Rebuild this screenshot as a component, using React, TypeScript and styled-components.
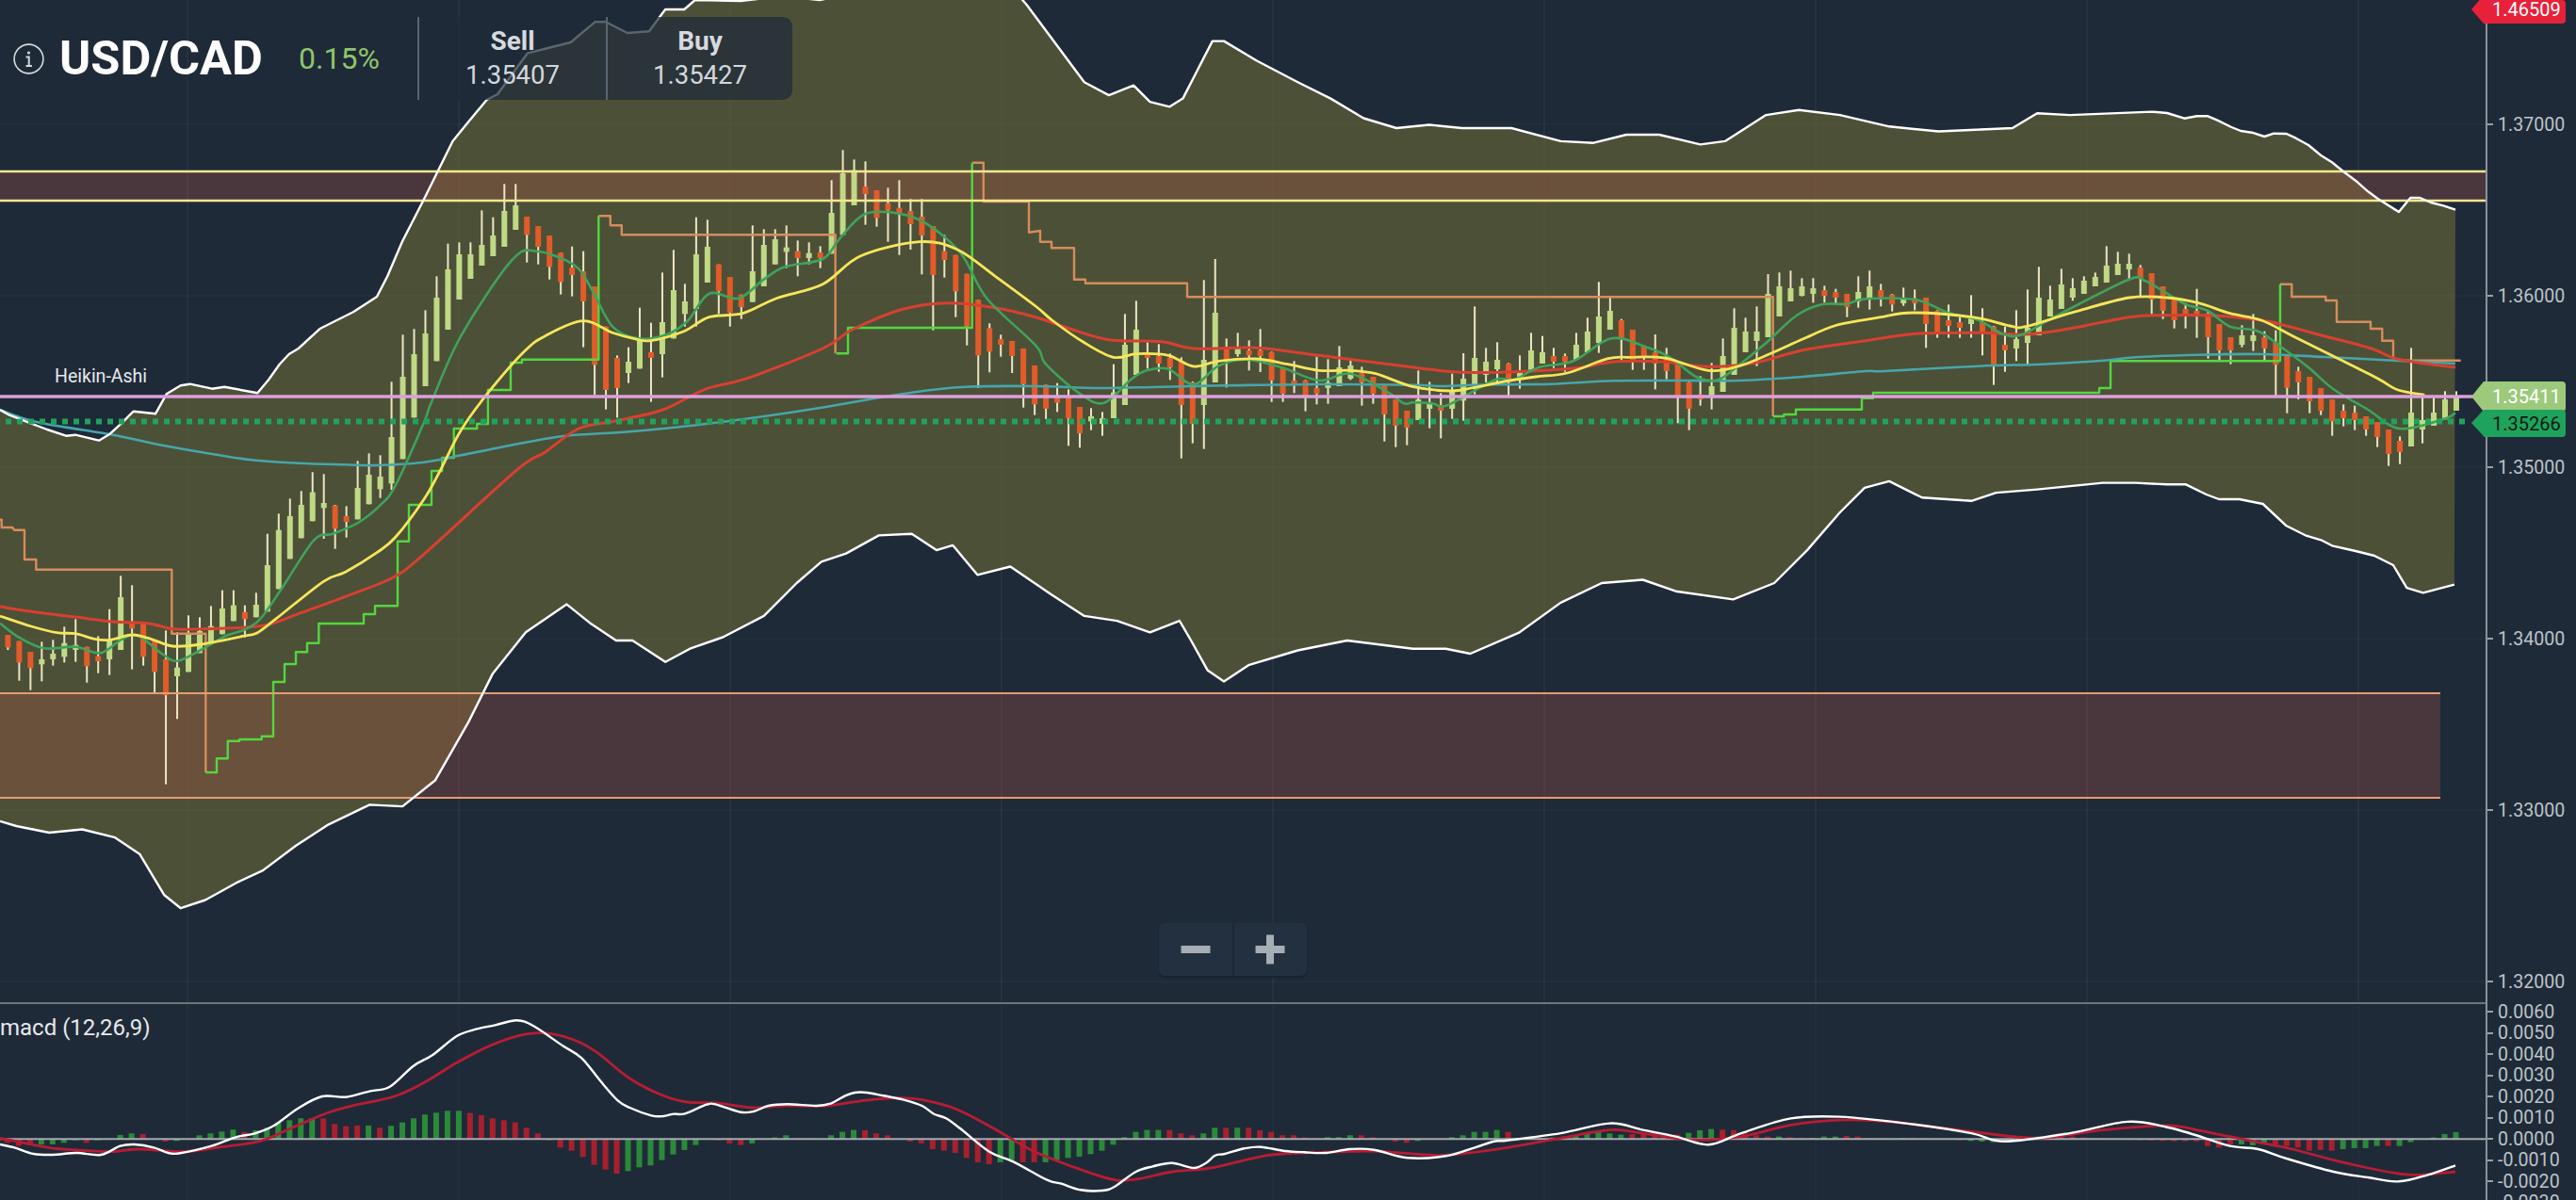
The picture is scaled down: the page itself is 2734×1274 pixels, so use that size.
import React from 'react';
import styled, { createGlobalStyle } from 'styled-components';

const GlobalStyle = createGlobalStyle`
  html, body {
    margin: 0;
    padding: 0;
    background: #1f2a38;
    font-family: Roboto, "Liberation Sans", sans-serif;
  }
`;

const Page = styled.div`
  position: relative;
  width: 2734px;
  height: 1274px;
  overflow: hidden;
  display: grid;
  grid-template-columns: 2638px 96px;
  grid-template-rows: 1066px 208px;
  background: #1f2a38;
`;

const Pane = styled.section`
  position: relative;
  min-width: 0;
`;

const MainPane = styled(Pane)`
  border-bottom: 2px solid #6f757b;
  box-sizing: border-box;
`;

const ChartSvg = styled.svg`
  display: block;
`;

const Header = styled.header`
  position: absolute;
  top: 18px;
  left: 0;
  height: 88px;
  display: flex;
  align-items: center;
  padding-left: 14px;
`;

const InfoIcon = styled.svg`
  width: 33px;
  height: 33px;
  flex: none;
  margin-right: 16px;
`;

const Title = styled.h1`
  width: 213px;
  flex: none;
  margin: 0 41px 0 0;
  font-size: 50.5px;
  line-height: 56px;
  font-weight: 700;
  color: #fff;
  white-space: nowrap;
`;

const Change = styled.span`
  width: 83px;
  flex: none;
  margin-right: 43px;
  font-size: 32px;
  font-weight: 400;
  color: #8fc56a;
  white-space: nowrap;
`;

const QuoteBox = styled.div`
  display: flex;
  height: 88px;
  background: rgba(31, 42, 56, 0.73);
  border-radius: 0 10px 10px 0;
  border-left: 2px solid #5a6470;
`;

const Quote = styled.div<{ $wide: number }>`
  width: ${({ $wide }) => $wide}px;
  box-sizing: border-box;
  padding-top: 11px;
  display: flex;
  flex-direction: column;
  align-items: center;
  gap: 6px;

  & + & {
    border-left: 2px solid #5a6470;
  }
`;

const QuoteLabel = styled.span`
  font-size: 28px;
  line-height: 30px;
  font-weight: 700;
  color: #d6dadf;
`;

const QuotePrice = styled.span`
  font-size: 27.5px;
  line-height: 30px;
  font-weight: 400;
  color: #d3d7db;
`;

const ChartType = styled.span`
  position: absolute;
  left: 58px;
  top: 388px;
  font-size: 19.5px;
  line-height: 24px;
  color: #e6e9ec;
`;

const ZoomBar = styled.div`
  position: absolute;
  left: 1230px;
  top: 980px;
  width: 157px;
  height: 56px;
  display: flex;
  background: #223040;
  border-radius: 6px;
  box-shadow: 0 2px 1px #19222e;
`;

const ZoomButton = styled.button<{ $plus?: boolean }>`
  position: relative;
  flex: 1;
  padding: 0;
  border: none;
  background: transparent;

  & + & {
    border-left: 2px solid #1d2836;
  }

  &::before {
    content: '';
    position: absolute;
    left: 50%;
    top: 50%;
    width: 31px;
    height: 8px;
    transform: translate(-50%, -50%);
    background: #a6adb4;
  }

  &::after {
    content: '';
    display: ${({ $plus }) => ($plus ? 'block' : 'none')};
    position: absolute;
    left: 50%;
    top: 50%;
    width: 8px;
    height: 31px;
    transform: translate(-50%, -50%);
    background: #a6adb4;
  }
`;

const Legend = styled.span`
  position: absolute;
  left: 0;
  top: 11px;
  font-size: 24px;
  line-height: 28px;
  color: #e6e9ec;
`;

const Axis = styled.ol`
  margin: 0;
  padding: 0;
  list-style: none;
  border-left: 2px solid #8b9199;
  overflow: hidden;
`;

const PriceAxis = styled(Axis)`
  padding-top: 41px;
`;

const TickRow = styled.li<{ $h: number }>`
  height: ${({ $h }) => $h}px;
  display: flex;
  align-items: center;
  gap: 5px;
  font-size: 19.6px;
  color: #bdc3c9;
  white-space: nowrap;

  &::before {
    content: '';
    width: 6px;
    height: 2px;
    flex: none;
    background: #9aa0a6;
  }
`;

const MacdTicks = styled.div`
  margin-top: -3.2px;
`;

const Tag = styled.div<{ $bg: string; $fg: string; $top: number; $h: number; $tip: number }>`
  position: absolute;
  left: 2636px;
  top: ${({ $top }) => $top}px;
  width: 87px;
  height: ${({ $h }) => $h}px;
  box-sizing: border-box;
  padding-left: 9px;
  padding-bottom: ${({ $h, $tip }) => Math.max($h - 2 * $tip, 0)}px;
  display: flex;
  align-items: center;
  font-size: 20px;
  color: ${({ $fg }) => $fg};
  background: ${({ $bg }) => $bg};
  border-radius: 0 4px 4px 0;

  &::before {
    content: '';
    position: absolute;
    left: -13px;
    top: ${({ $h, $tip }) => $tip - Math.max($tip, $h - $tip)}px;
    width: 0;
    height: 0;
    border-style: solid;
    border-width: ${({ $h, $tip }) => Math.max($tip, $h - $tip)}px 13px ${({ $h, $tip }) => Math.max($tip, $h - $tip)}px 0;
    border-color: transparent ${({ $bg }) => $bg} transparent transparent;
  }
`;

type Pt = [number, number];

// zoom crop coordinates -> page pixels
const seg = (ox: number, oy: number, sx: number, v: number[]): Pt[] => {
  const out: Pt[] = [];
  for (let i = 0; i < v.length; i += 2) out.push([ox + v[i] / sx, oy + v[i + 1] / 3]);
  return out;
};
const z8 = (v: number[]) => seg(0, 370, 3, v);
const z7 = (v: number[]) => seg(400, 150, 2.24, v);
const z9 = (v: number[]) => seg(1000, 240, 3, v);
const z10 = (v: number[]) => seg(1480, 240, 3, v);
const z11 = (v: number[]) => seg(1900, 240, 3, v);
const z3 = (v: number[]) => seg(2300, 300, 3, v);
const z2 = (v: number[]) => seg(2300, 0, 3, v);
const z1 = (v: number[]) => seg(0, 0, 1.742, v);
const z6 = (v: number[]) => seg(0, 1040, 1.96, v);
const z12 = (v: number[]) => seg(800, 1100, 1.96, v);
const z4 = (v: number[]) => seg(2300, 1040, 3, v);
const disp = (v: number[]): Pt[] => {
  const out: Pt[] = [];
  for (let i = 0; i < v.length; i += 2) out.push([v[i] * 1.7436, v[i + 1] * 1.7436]);
  return out;
};

const increasing = (pts: Pt[]) => {
  const out: Pt[] = [];
  pts.forEach((p) => {
    if (!out.length || p[0] > out[out.length - 1][0] + 1) out.push(p);
  });
  return out;
};

const poly = (pts: Pt[]) =>
  pts.map((p, i) => `${i ? 'L' : 'M'}${p[0].toFixed(1)} ${p[1].toFixed(1)}`).join('');

const smooth = (raw: Pt[]) => {
  const p = increasing(raw);
  let d = `M${p[0][0].toFixed(1)} ${p[0][1].toFixed(1)}`;
  for (let i = 0; i < p.length - 1; i++) {
    const a = p[Math.max(i - 1, 0)];
    const b = p[i];
    const c = p[i + 1];
    const e = p[Math.min(i + 2, p.length - 1)];
    const c1x = b[0] + (c[0] - a[0]) / 6;
    const c1y = b[1] + (c[1] - a[1]) / 6;
    const c2x = c[0] - (e[0] - b[0]) / 6;
    const c2y = c[1] - (e[1] - b[1]) / 6;
    d += `C${c1x.toFixed(1)} ${c1y.toFixed(1)} ${c2x.toFixed(1)} ${c2y.toFixed(1)} ${c[0].toFixed(1)} ${c[1].toFixed(1)}`;
  }
  return d;
};

const upperBand: Pt[] = [
  ...z8([0, 195, 30, 212, 90, 235, 150, 258, 210, 278, 240, 275, 315, 293, 350, 272, 390, 235, 425, 200, 495, 208, 530, 145, 575, 118, 605, 113, 675, 128, 715, 122, 820, 142, 855, 100, 890, 50, 920, 18, 950, 0]),
  ...disp([195, 200, 215, 190]),
  ...z7([0, 495, 25, 430, 60, 320, 110, 190, 145, 95, 180, 0]),
  ...z1([865, 390, 900, 318, 920, 300, 975, 170, 1020, 150, 1055, 135, 1100, 70, 1120, 70, 1160, 105, 1200, 100, 1230, 30, 1265, 30, 1285, 0]),
  [786, 1],
  [830, -4],
  [870, 0],
  [900, -6],
  [1080, -6],
  ...disp([625, 3, 660, 50, 675, 58, 690, 52, 700, 62, 712, 65, 720, 60, 738, 25, 745, 25, 765, 37, 790, 50, 810, 60, 830, 72, 850, 78, 870, 76, 890, 78, 920, 78, 950, 86, 970, 87, 990, 82, 1010, 82, 1035, 88, 1050, 86, 1075, 70, 1095, 67, 1120, 70, 1150, 77, 1180, 80, 1225, 78, 1240, 69, 1260, 70, 1310, 68]),
  ...z2([0, 360, 55, 377, 95, 370, 130, 370, 160, 383, 205, 405, 235, 417, 270, 422, 310, 435, 340, 425, 380, 426, 410, 440, 450, 462, 490, 495, 525, 517, 560, 545, 600, 575, 640, 610, 670, 632, 738, 675, 775, 630, 805, 630, 840, 645, 880, 655, 918, 668]),
];

const lowerBand: Pt[] = [
  ...disp([0, 500, 10, 503, 30, 507, 50, 505, 70, 510, 85, 520, 100, 545, 110, 553, 125, 548, 145, 537, 160, 530, 180, 515, 200, 502, 225, 490, 245, 491, 265, 475, 285, 440, 300, 410, 320, 385, 345, 368, 360, 380, 375, 390, 385, 390, 405, 403, 420, 395, 440, 388, 465, 375, 485, 355, 500, 342, 515, 337, 535, 326, 555, 325, 570, 335, 580, 332, 595, 350, 615, 345, 640, 362, 660, 375, 680, 378, 700, 385, 718, 378, 725, 390, 735, 408, 745, 415, 760, 405, 790, 396, 805, 393, 820, 390, 860, 395, 880, 395, 895, 398, 925, 385, 950, 367, 975, 355, 1000, 353, 1020, 360, 1055, 365, 1080, 355, 1100, 335, 1120, 312, 1135, 297, 1150, 293, 1170, 303, 1200, 305, 1215, 300, 1240, 298, 1260, 296, 1280, 294, 1300, 294]),
  ...z3([0, 643, 60, 643, 125, 675, 165, 690, 230, 690, 305, 705, 380, 775, 440, 805, 490, 820, 525, 838, 600, 855, 660, 870, 720, 900]),
  ...disp([1465, 358, 1475, 361, 1494, 356]),
];

const lineTeal = [
  ...z8([0, 195, 120, 235, 360, 275, 500, 305, 640, 330, 800, 355, 950, 365, 1100, 370, 1200, 372, 1350, 362]),
  ...z7([200, 1000, 350, 960, 450, 938, 600, 925, 750, 905, 900, 880, 1050, 850, 1200, 815, 1300, 795, 1400, 782, 1566, 780]),
  ...z9([300, 510, 500, 516, 700, 512, 900, 508, 1200, 504, 1500, 506]),
  ...z10([150, 510, 300, 505, 500, 503, 700, 493, 900, 492, 1100, 492, 1300, 480, 1500, 462]),
  ...z11([300, 462, 600, 446, 800, 440, 1000, 428, 1100, 418, 1300, 410, 1500, 408]),
  ...z3([300, 230, 500, 237, 720, 248, 918, 258]),
];

const lineRed = [
  ...z8([0, 822, 100, 838, 240, 855, 360, 870, 470, 875, 550, 893, 650, 893, 780, 888, 860, 878, 950, 845, 1100, 790, 1250, 730, 1350, 655]),
  ...z7([330, 1050, 400, 990, 480, 915, 570, 890, 680, 855, 780, 790, 880, 755, 1060, 660, 1130, 600, 1250, 535, 1360, 515, 1470, 530, 1566, 560]),
  ...z9([400, 325, 530, 362, 700, 368, 800, 390, 1000, 388, 1200, 412, 1500, 450]),
  ...z10([100, 455, 200, 465, 360, 465, 500, 458, 600, 450, 700, 432, 850, 432, 1000, 448, 1150, 435, 1300, 395, 1500, 365]),
  ...z11([200, 370, 400, 343, 600, 340, 750, 345, 900, 325, 1080, 290, 1200, 284, 1350, 285, 1500, 300]),
  ...z3([370, 135, 500, 170, 650, 210, 720, 240, 800, 255, 918, 270]),
];

const lineYellow = [
  ...z8([0, 852, 100, 885, 180, 905, 240, 908, 300, 925, 350, 928, 420, 912, 480, 925, 550, 948, 640, 942, 780, 915, 820, 905, 880, 860, 1030, 742, 1100, 712, 1200, 650, 1260, 600, 1350, 480]),
  ...z7([150, 1050, 200, 920, 265, 800, 350, 670, 400, 620, 490, 572, 560, 610, 610, 628, 650, 635, 730, 605, 790, 560, 870, 548, 950, 500, 1060, 455, 1150, 365, 1290, 320, 1380, 345, 1470, 430, 1566, 525]),
  ...z9([350, 300, 450, 370, 545, 418, 620, 407, 720, 412, 800, 447, 880, 430, 1000, 423, 1100, 440, 1200, 460, 1300, 460, 1380, 470, 1500, 512]),
  ...z10([50, 510, 180, 525, 250, 515, 350, 495, 450, 480, 550, 468, 680, 422, 750, 418, 860, 420, 1000, 460, 1100, 445, 1200, 405, 1300, 360, 1400, 318, 1500, 298]),
  ...z11([150, 318, 290, 290, 390, 276, 580, 290, 700, 318, 750, 320, 900, 275, 1080, 228, 1200, 228]),
  ...z3([100, 65, 200, 98, 300, 120, 400, 170, 530, 235, 670, 305, 735, 342, 820, 358]),
];

const lineGreen = [
  ...z8([0, 875, 60, 920, 140, 955, 240, 950, 320, 970, 390, 925, 440, 915, 520, 975, 565, 995, 640, 960, 720, 915, 780, 895, 830, 860, 900, 760, 1000, 610, 1060, 590, 1140, 555, 1210, 500, 1260, 435, 1350, 235]),
  ...z7([130, 830, 200, 620, 320, 380, 380, 350, 470, 395, 510, 470, 560, 590, 620, 628, 690, 615, 740, 570, 790, 485, 860, 500, 920, 440, 970, 400, 1060, 375, 1100, 310, 1160, 232, 1240, 230, 1310, 265, 1390, 360, 1450, 500, 1566, 650]),
  ...z9([330, 440, 440, 535, 515, 563, 600, 490, 650, 460, 720, 455, 800, 505, 880, 445, 970, 425, 1080, 450, 1200, 492, 1300, 470, 1420, 530, 1470, 565, 1500, 562]),
  ...z10([120, 565, 170, 570, 320, 490, 380, 490, 460, 450, 570, 430, 690, 358, 800, 385, 880, 420, 960, 480, 1030, 490, 1100, 440, 1180, 375, 1280, 285, 1360, 250, 1440, 248, 1500, 232]),
  ...z11([130, 243, 240, 228, 400, 235, 500, 275, 600, 300, 680, 345, 740, 345, 840, 290, 1075, 172, 1130, 175, 1200, 215]),
  ...z3([60, 70, 130, 90, 200, 140, 290, 155, 370, 210, 450, 270, 530, 340, 640, 405, 740, 465, 880, 435, 918, 415]),
];

const stepsOrange: Pt[][] = [
  z8([0, 545, 5, 545, 5, 570, 40, 570, 45, 578, 78, 578, 78, 672, 115, 672, 115, 704, 547, 704, 547, 908, 655, 908, 655, 1350]),
  z7([527, 238, 555, 238, 555, 268, 582, 268, 582, 298, 1090, 298, 1090, 676]),
  [
    ...z7([1415, 68, 1442, 68, 1442, 192, 1550, 192, 1550, 290]),
    ...z9([312, 15, 312, 50, 348, 50, 348, 70, 420, 70, 420, 170, 456, 170, 456, 182, 780, 182, 780, 226]),
    ...z10([1205, 226, 1205, 606]),
  ],
  z3([360, 5, 397, 5, 397, 45, 505, 45, 505, 57, 540, 57, 540, 125, 648, 125, 648, 147, 685, 147, 685, 185, 720, 185, 720, 248, 935, 248]),
];

const stepsGreen: Pt[][] = [
  [
    ...z8([655, 1350, 690, 1350, 690, 1306, 725, 1306, 725, 1250, 762, 1250, 762, 1245, 833, 1245, 833, 1235, 870, 1235, 870, 1062, 906, 1062, 906, 1005, 942, 1005, 942, 967, 978, 967, 978, 938, 1015, 938, 1015, 876, 1158, 876, 1158, 846, 1194, 846, 1194, 820, 1266, 820, 1266, 614, 1302, 614, 1302, 498]),
    [458, 536],
    [458, 500],
    ...z7([155, 1050, 155, 1008, 183, 1008, 183, 915, 238, 915, 238, 900, 264, 900, 264, 792, 318, 792, 318, 705, 345, 705, 345, 695, 527, 695, 527, 238]),
  ],
  z7([1093, 676, 1120, 676, 1120, 594, 1415, 594, 1415, 70]),
  [
    ...z10([1205, 606, 1240, 606, 1240, 600, 1278, 600, 1278, 584]),
    ...z11([228, 584, 228, 548, 264, 548, 264, 531, 984, 531, 984, 516, 1020, 516, 1020, 430]),
    ...z3([360, 250, 360, 5]),
  ],
];

// [high, bodyTop, bodyBottom, low, rising]
type Row = [number, number, number, number, number];

const rowsA: Row[] = [
  [912, 912, 952, 960, 0], [932, 932, 1000, 1058, 0], [966, 966, 1018, 1088, 0], [934, 990, 1006, 1060, 1],
  [928, 972, 990, 1010, 1], [886, 938, 982, 1000, 1], [862, 944, 960, 998, 1], [950, 950, 1012, 1064, 0],
  [916, 980, 996, 1034, 0], [830, 930, 990, 1040, 1], [724, 792, 960, 960, 1], [754, 876, 892, 1022, 0],
  [870, 876, 982, 1010, 0], [930, 930, 1030, 1096, 0], [898, 990, 1104, 1388, 0], [904, 1016, 1044, 1180, 1],
  [850, 910, 1030, 1030, 1], [856, 900, 970, 970, 1], [820, 884, 940, 940, 1], [770, 828, 910, 910, 1],
  [770, 818, 868, 868, 1], [818, 840, 862, 920, 0], [778, 816, 856, 856, 1], [590, 690, 838, 838, 1],
  [526, 578, 766, 766, 1], [478, 534, 670, 670, 1], [454, 498, 604, 604, 1], [394, 458, 550, 550, 1],
  [400, 492, 508, 606, 1], [498, 500, 574, 638, 0], [502, 534, 552, 602, 0], [358, 444, 544, 544, 1],
  [334, 402, 496, 496, 1], [340, 408, 448, 476, 1], [106, 282, 430, 450, 1],
];

const rowsB: Row[] = [
  [616, 750, 1012, 1012, 1], [598, 678, 880, 880, 1], [538, 612, 780, 780, 1], [430, 498, 700, 700, 1],
  [326, 408, 600, 600, 1], [322, 360, 504, 504, 1], [322, 360, 438, 438, 1], [220, 330, 396, 396, 1],
  [242, 300, 366, 366, 1], [136, 222, 336, 336, 1], [136, 204, 282, 282, 1], [240, 240, 298, 386, 0],
  [270, 270, 336, 392, 0], [300, 300, 400, 440, 0], [355, 355, 448, 488, 0], [335, 402, 426, 494, 0],
  [350, 414, 510, 656, 0], [462, 462, 712, 808, 0], [590, 590, 792, 854, 0], [682, 690, 786, 880, 0],
  [656, 702, 738, 770, 1], [530, 630, 724, 724, 1], [578, 672, 690, 830, 0], [418, 576, 678, 752, 1],
  [346, 474, 628, 628, 1], [454, 510, 550, 590, 1], [242, 360, 534, 590, 1], [250, 336, 450, 450, 1],
  [392, 392, 478, 550, 0], [432, 432, 546, 590, 0], [488, 488, 528, 566, 0], [268, 414, 512, 512, 1],
  [280, 330, 462, 462, 1], [280, 312, 392, 392, 1], [268, 338, 352, 404, 1], [316, 350, 372, 430, 0],
  [322, 356, 372, 392, 1], [334, 354, 372, 404, 0], [124, 228, 358, 358, 1], [28, 102, 298, 298, 1],
  [58, 92, 204, 204, 1], [64, 144, 168, 266, 0], [156, 156, 244, 272, 0], [148, 198, 220, 320, 0],
  [124, 212, 228, 362, 0], [184, 222, 264, 345, 0], [184, 240, 300, 424, 0], [270, 270, 426, 602, 0],
  [298, 350, 378, 434, 0], [362, 362, 478, 560, 0], [422, 422, 590, 650, 0], [505, 505, 682, 786, 0],
  [580, 595, 670, 736, 0], [616, 630, 648, 686, 0], [636, 636, 684, 738, 0], [660, 660, 774, 848, 0],
  [714, 714, 838, 872, 0],
];

const rowsC: Row[] = [
  [505, 505, 582, 615, 0], [500, 545, 563, 592, 0], [520, 545, 612, 700, 0], [576, 576, 660, 706, 0],
  [580, 606, 622, 650, 1], [592, 612, 630, 668, 1], [440, 530, 612, 612, 1], [280, 378, 570, 570, 1],
  [238, 330, 474, 474, 1], [370, 402, 420, 454, 0], [376, 414, 438, 464, 0], [406, 420, 450, 490, 0],
  [418, 432, 570, 740, 0], [495, 498, 630, 692, 0], [172, 426, 570, 710, 1], [105, 276, 498, 498, 1],
  [358, 384, 426, 514, 0], [340, 390, 408, 416, 1], [364, 396, 412, 460, 0], [328, 396, 414, 465, 0],
  [400, 402, 492, 560, 0], [450, 452, 534, 560, 0], [430, 492, 508, 532, 0], [490, 492, 546, 590, 0],
  [416, 516, 534, 568, 0], [424, 498, 516, 566, 1], [382, 450, 510, 510, 1], [424, 444, 486, 490, 1],
  [448, 468, 498, 572, 0], [480, 480, 534, 566, 0], [508, 508, 600, 686, 0], [552, 552, 636, 704, 0],
  [588, 588, 642, 698, 0], [460, 552, 618, 618, 1], [496, 564, 582, 644, 1], [532, 570, 588, 676, 0],
  [470, 528, 582, 614, 1], [405, 486, 556, 620, 1], [256, 420, 510, 536, 1], [388, 432, 474, 498, 1],
  [370, 426, 456, 500, 1], [436, 438, 498, 540, 0], [412, 466, 480, 518, 1], [340, 396, 462, 462, 1],
  [350, 402, 438, 438, 1], [388, 414, 432, 452, 0], [406, 414, 432, 464, 0], [340, 378, 426, 426, 1],
  [292, 336, 402, 402, 1], [178, 288, 372, 404, 1], [228, 270, 330, 330, 1], [296, 300, 360, 430, 0],
  [330, 330, 426, 458, 0], [380, 384, 420, 458, 0], [345, 402, 438, 520, 0], [388, 420, 462, 488, 0],
  [438, 440, 540, 628, 0], [496, 498, 582, 650, 0], [478, 536, 552, 572, 0], [436, 510, 540, 584, 1],
  [358, 414, 528, 528, 1], [262, 324, 474, 474, 1], [292, 336, 402, 402, 1], [256, 336, 366, 446, 1],
  [153, 216, 354, 354, 1], [148, 192, 288, 288, 1], [142, 198, 240, 240, 1], [166, 192, 222, 224, 1],
  [166, 198, 216, 244, 1], [190, 204, 222, 244, 0], [200, 210, 228, 248, 0], [216, 216, 258, 290, 0],
  [160, 210, 240, 260, 1], [142, 192, 228, 266, 1], [184, 204, 226, 256, 0], [216, 218, 250, 272, 0],
  [196, 230, 246, 254, 1], [202, 230, 246, 268, 0], [228, 228, 312, 388, 0], [268, 270, 336, 356, 0],
  [250, 300, 318, 356, 0], [290, 306, 324, 356, 0], [220, 294, 312, 356, 1], [262, 306, 342, 412, 0],
  [318, 320, 444, 506, 0], [320, 378, 396, 464, 0], [268, 360, 390, 430, 1], [202, 324, 372, 440, 1],
  [130, 228, 348, 348, 1], [190, 234, 288, 288, 1], [136, 186, 264, 264, 1], [166, 198, 228, 238, 1],
  [160, 174, 216, 216, 1], [148, 162, 192, 192, 1], [64, 126, 180, 180, 1], [82, 120, 156, 156, 1],
  [88, 120, 138, 170, 1], [124, 132, 168, 228, 0], [150, 150, 234, 280, 0], [192, 192, 270, 296, 0],
  [230, 230, 300, 326, 0], [245, 264, 286, 326, 0], [200, 270, 288, 356, 0], [270, 278, 354, 422, 0],
  [312, 312, 396, 428, 0], [354, 354, 396, 440, 0], [316, 348, 378, 386, 1], [280, 348, 366, 398, 1],
];

const rowsD: Row[] = [
  [155, 174, 210, 252, 0], [152, 192, 262, 366, 0], [232, 234, 335, 416, 0], [268, 282, 318, 372, 0],
  [300, 300, 378, 416, 0], [336, 336, 408, 422, 0], [372, 372, 442, 488, 0], [388, 408, 432, 458, 0],
  [392, 414, 438, 470, 0], [426, 426, 468, 488, 0], [444, 444, 492, 524, 0], [468, 468, 546, 584, 0],
  [490, 504, 540, 578, 0], [208, 414, 522, 522, 1], [366, 438, 468, 512, 1], [366, 414, 456, 456, 1],
  [346, 372, 436, 436, 1], [346, 366, 408, 408, 1],
];

const candles = [
  ...rowsA.map((r) => ({ base: 370, r })),
  ...rowsB.map((r) => ({ base: 150, r })),
  ...rowsC.map((r) => ({ base: 240, r })),
  ...rowsD.map((r) => ({ base: 300, r })),
];

const candleX = (i: number) => 8.4 + 11.975 * i;

// histogram bars: crop y of the bar end, negative means a red bar
const histA = [-520, -530, -525, 525, 525, 520, 512, -520, 512, 508, 495, 490, -492, 508, -516, 514, 508, 496, 490, 484, 478, -485, 480, 472, 455, 448, 442, 442, -442, -460, -467, -465, 465, -472, 466, 455, 442, 430, 424, 418, 418, -425, -432, -442, -448, -455, -472, -490, -512, -535, -545, -565, -590, -605, -618, 610, 598, 592, 575, 557, 543, 527, 508, -512, -522, -527, 522];
const histB = [328, 323, 316, -324, -325, 328, 316, 305, 299, -300, -310, -316, 328, -336, -342, -360, -365, -372, -388, -402, -408, 402, 395, -402, -402, 402, 395, 388, 384, 376, 365, 346, 322, 305, 299, 299, -299, -310, -316, 310, 292, -292, 292, -292, -300, -305, -316, -316, -323, -325, 322, 322, 316, -316, -322, 328, -336, -340, 334, 328, 328, 322, 316, 305, 305, 299, -305];
const histC = [-505, -502, -505, 503, 500, 496, 490, 486, 490, 494, -492, -488, -486, -490, -494, 488, 480, 476, -478, -480, -490, -496, -500, 500, -502, -504, 504, 500, 500, -498, -500, -504, -505, 508, 505, -504, -506, -508, -510, -512, 514, 516, 518, 514, 510, 506, 500, 498, -498, -500, -503, -505, -507, -509, -511, -512, -513, -514, -515, -515, -515, -530, -535, -525, 525, 528, 525, -525, -530, -535, -545, -543, -545, 540, 537, 537, 530, -530, 530, 518, 508, 503, 492, 486];

const bars = [
  ...histA.map((v) => ({ h: (508 - Math.abs(v)) / 3, up: v > 0 })),
  ...histB.map((v) => ({ h: (328 - Math.abs(v)) / 3, up: v > 0 })),
  ...histC.map((v) => ({ h: (508 - Math.abs(v)) / 3, up: v > 0 })),
];

const macdWhite = [
  ...z6([0, 525, 30, 535, 70, 555, 110, 558, 160, 552, 210, 558, 250, 530, 280, 525, 320, 535, 350, 552, 375, 553, 440, 530, 490, 502, 530, 490, 570, 465, 620, 410, 670, 372, 720, 374, 770, 355, 810, 342, 860, 275, 900, 240, 950, 180, 990, 158, 1030, 145, 1075, 130, 1110, 148, 1170, 210, 1210, 250, 1250, 325, 1285, 385, 1310, 408, 1355, 433, 1380, 435, 1400, 428, 1425, 427, 1470, 398, 1490, 398, 1540, 422, 1568, 420]),
  ...z12([30, 222, 70, 217, 130, 222, 160, 215, 190, 190, 210, 180, 235, 180, 270, 190, 310, 202, 350, 222, 375, 248, 400, 262, 430, 295, 490, 368, 540, 400, 610, 458, 640, 470, 680, 490, 725, 492, 750, 480, 795, 432, 830, 415, 870, 404, 915, 420, 940, 405, 960, 380, 980, 375, 1020, 358, 1055, 353, 1105, 366, 1145, 370, 1190, 372, 1240, 360, 1290, 362, 1360, 388, 1440, 382, 1500, 355, 1540, 335, 1568, 332]),
  ...disp([950, 690, 980, 684, 1000, 688, 1020, 692, 1040, 697, 1060, 690, 1090, 681, 1120, 680, 1160, 684, 1200, 690, 1220, 695, 1260, 690, 1295, 683]),
  ...z4([0, 470, 90, 495, 200, 530, 290, 540, 380, 570, 530, 612, 640, 630, 738, 643, 830, 622, 918, 592]),
];

const macdRed = [
  ...z6([0, 505, 50, 520, 100, 535, 160, 543, 230, 548, 290, 540, 380, 548, 450, 535, 540, 515, 610, 470, 680, 425, 730, 403, 820, 372, 880, 330, 950, 265, 1020, 210, 1080, 178, 1130, 170, 1190, 190, 1240, 230, 1310, 315, 1380, 370, 1430, 390, 1490, 393, 1568, 408]),
  ...z12([60, 222, 150, 222, 230, 205, 300, 197, 350, 203, 420, 232, 500, 295, 580, 365, 680, 425, 750, 458, 800, 455, 870, 432, 950, 420, 1050, 385, 1100, 375, 1250, 367, 1300, 367, 1400, 378, 1450, 378, 1568, 355]),
  ...disp([950, 693, 980, 688, 1000, 690, 1030, 694, 1060, 692, 1090, 685, 1120, 682, 1150, 683, 1200, 689, 1240, 693, 1280, 688]),
  ...z4([0, 465, 90, 478, 200, 500, 300, 520, 400, 540, 530, 575, 640, 600, 738, 618, 800, 622, 918, 612]),
];

const gridX = [199, 487, 775, 1063, 1351, 1639, 1927, 2215, 2503];
const priceTicks = ['1.37000', '1.36000', '1.35000', '1.34000', '1.33000', '1.32000'];
const macdTicks = ['0.0060', '0.0050', '0.0040', '0.0030', '0.0020', '0.0010', '0.0000', '-0.0010', '-0.0020', '-0.0030'];

const PriceChart = () => {
  const olive = `${poly(upperBand)}${poly([...lowerBand].reverse()).replace('M', 'L')}Z`;
  return (
    <ChartSvg width="2638" height="1064" viewBox="0 0 2638 1064">
      <g stroke="#fff" strokeOpacity="0.02" strokeWidth="2">
        {gridX.map((x) => (
          <line key={x} x1={x} x2={x} y1="0" y2="1064" />
        ))}
      </g>
      <path d={olive} fill="#4c5037" />
      <g stroke="#fff" strokeOpacity="0.02" strokeWidth="2">
        {gridX.map((x) => (
          <line key={x} x1={x} x2={x} y1="0" y2="1064" />
        ))}
        {[132, 314, 496, 678, 860, 1042].map((y) => (
          <line key={y} x1="0" x2="2638" y1={y} y2={y} />
        ))}
      </g>

      <rect x="0" y="182" width="2638" height="31" fill="rgb(186,85,75)" fillOpacity="0.28" />
      <rect x="0" y="736" width="2590" height="111" fill="rgb(186,85,75)" fillOpacity="0.28" />

      {candles.map(({ base, r }, i) => {
        const x = candleX(i);
        const [hi, top, bottom, lo, up] = r;
        return (
          <g key={i}>
            <rect x={x - 1} y={base + hi / 3} width="2" height={(lo - hi) / 3} fill="#ece6c3" />
            <rect
              x={x - 3}
              y={base + top / 3}
              width="6"
              height={(bottom - top) / 3}
              fill={up ? '#bfd985' : '#e25b28'}
            />
          </g>
        );
      })}

      <g fill="none" strokeWidth="2.4" strokeLinejoin="round">
        {stepsOrange.map((s, i) => (
          <path key={i} d={poly(s)} stroke="#d68c5c" />
        ))}
        {stepsGreen.map((s, i) => (
          <path key={i} d={poly(s)} stroke="#55d63f" />
        ))}
        <path d={smooth(lineTeal)} stroke="#46a6aa" strokeWidth="2.6" />
        <path d={smooth(lineRed)} stroke="#d8402f" strokeWidth="3" />
        <path d={smooth(lineGreen)} stroke="#3fa25c" strokeWidth="2.6" />
        <path d={smooth(lineYellow)} stroke="#f6e65a" strokeWidth="2.8" />
      </g>

      <g stroke="#f2e78d" strokeWidth="2.4">
        <line x1="0" x2="2638" y1="182" y2="182" />
        <line x1="0" x2="2638" y1="213" y2="213" />
      </g>
      <g stroke="#e89a6f" strokeWidth="2.2">
        <line x1="0" x2="2590" y1="736" y2="736" />
        <line x1="0" x2="2590" y1="847" y2="847" />
      </g>

      <path d={poly(upperBand)} fill="none" stroke="#fff" strokeWidth="2.4" strokeLinejoin="round" />
      <path d={poly(lowerBand)} fill="none" stroke="#fff" strokeWidth="2.4" strokeLinejoin="round" />

      <line x1="6" x2="2620" y1="447.5" y2="447.5" stroke="#1fa35c" strokeWidth="6" strokeDasharray="6 6" />
      <line x1="0" x2="2638" y1="421" y2="421" stroke="#dc9fdc" strokeWidth="3.4" />
    </ChartSvg>
  );
};

const MacdChart = () => (
  <ChartSvg width="2638" height="208" viewBox="0 1066 2638 208">
    <g stroke="#fff" strokeOpacity="0.02" strokeWidth="2">
      {gridX.map((x) => (
        <line key={x} x1={x} x2={x} y1="1066" y2="1274" />
      ))}
    </g>
    {bars.map((b, i) =>
      b.h === 0 ? null : (
        <rect
          key={i}
          x={candleX(i) - 3.5}
          y={1209.3 - Math.max(b.h, 0)}
          width="6"
          height={Math.abs(b.h)}
          fill={b.up ? '#2a8a3a' : '#a81f2e'}
        />
      ),
    )}
    <line x1="0" x2="2638" y1="1209.3" y2="1209.3" stroke="#a6abaf" strokeWidth="2" />
    <path d={smooth(macdRed)} fill="none" stroke="#b81c34" strokeWidth="2.8" />
    <path d={smooth(macdWhite)} fill="none" stroke="#fff" strokeWidth="2.4" />
  </ChartSvg>
);

export default function App() {
  return (
    <>
      <GlobalStyle />
      <Page>
        <MainPane>
          <PriceChart />
          <Header>
            <InfoIcon viewBox="0 0 33 33" fill="none" stroke="#d5d8db" strokeWidth="1.6">
              <circle cx="16.5" cy="16.5" r="15.4" />
              <circle cx="16.5" cy="10" r="1.6" fill="#d5d8db" stroke="none" />
              <path d="M13.5 14.5h3.2v9M13.5 24h6.4" strokeWidth="2" />
            </InfoIcon>
            <Title>USD/CAD</Title>
            <Change>0.15%</Change>
            <QuoteBox>
              <Quote $wide={198}>
                <QuoteLabel>Sell</QuoteLabel>
                <QuotePrice>1.35407</QuotePrice>
              </Quote>
              <Quote $wide={198}>
                <QuoteLabel>Buy</QuoteLabel>
                <QuotePrice>1.35427</QuotePrice>
              </Quote>
            </QuoteBox>
          </Header>
          <ChartType>Heikin-Ashi</ChartType>
          <ZoomBar>
            <ZoomButton type="button" aria-label="Zoom out" />
            <ZoomButton type="button" aria-label="Zoom in" $plus />
          </ZoomBar>
        </MainPane>
        <PriceAxis>
          {priceTicks.map((t) => (
            <TickRow key={t} $h={182}>
              {t}
            </TickRow>
          ))}
        </PriceAxis>
        <Pane>
          <MacdChart />
          <Legend>macd (12,26,9)</Legend>
        </Pane>
        <Axis>
          <MacdTicks>
            {macdTicks.map((t) => (
              <TickRow key={t} $h={22.5}>
                {t}
              </TickRow>
            ))}
          </MacdTicks>
        </Axis>
        <Tag $bg="#e8213a" $fg="#fff" $top={0} $h={25} $tip={10}>
          1.46509
        </Tag>
        <Tag $bg="#9cc97b" $fg="#fff" $top={405} $h={32} $tip={16}>
          1.35411
        </Tag>
        <Tag $bg="#1fa35c" $fg="#0c1a14" $top={435} $h={29} $tip={14.5}>
          1.35266
        </Tag>
      </Page>
    </>
  );
}
